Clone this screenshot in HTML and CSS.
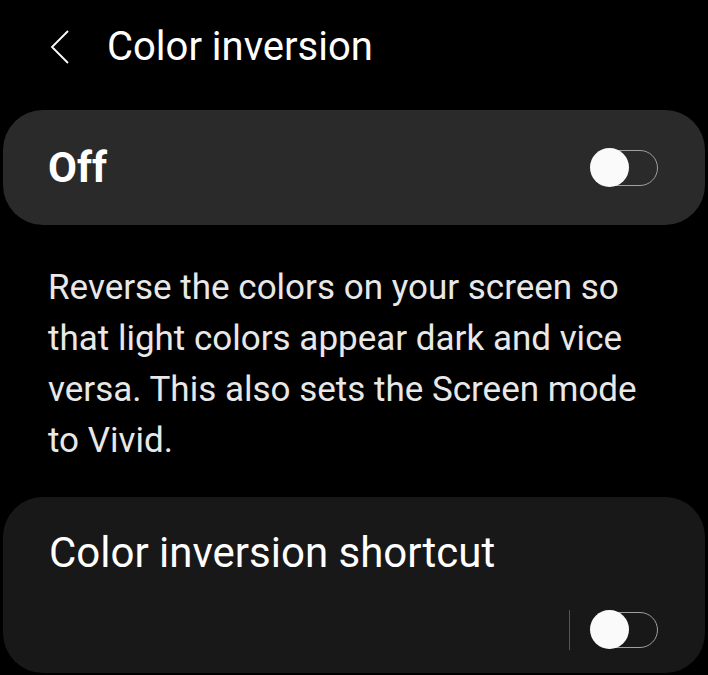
FILE: index.html
```html
<!DOCTYPE html>
<html>
<head>
<meta charset="utf-8">
<link rel="stylesheet" href="styles.css">
</head>
<body>
<div class="screen">
  <header class="header">
    <svg class="back" width="20" height="36" viewBox="0 0 20 36"><path d="M18 2 L2 18 L18 34" fill="none" stroke="#fff" stroke-width="1.8"/></svg>
    <h1 class="title">Color inversion</h1>
  </header>
  <section class="card card-main">
    <span class="main-label">Off</span>
    <span class="switch"><span class="knob"></span></span>
  </section>
  <p class="desc">Reverse the colors on your screen so that light colors appear dark and vice versa. This also sets the Screen mode to Vivid.</p>
  <section class="card card-shortcut">
    <div class="shortcut-title">Color inversion shortcut</div>
    <div class="shortcut-row">
      <span class="divider"></span>
      <span class="switch"><span class="knob"></span></span>
    </div>
  </section>
</div>
</body>
</html>
```
FILE: styles.css
```css
* { box-sizing: border-box; }
html, body { margin: 0; padding: 0; background: #000; }
body { font-family: Roboto, "Noto Sans", sans-serif; color: #fff; width: 708px; height: 675px; overflow: hidden; }
.screen { display: flex; flex-direction: column; padding: 0 3px; }
.header { height: 94px; display: flex; align-items: center; padding-left: 47px; }
.back { display: block; }
.title { margin: 0 0 0 37px; font-size: 40px; font-weight: 400; line-height: 1; }
.card { border-radius: 40px; }
.card-main { margin-top: 16px; height: 115px; background: #2a2a2a; display: flex; align-items: center; justify-content: space-between; padding: 0 47px 0 45px; }
.main-label { font-size: 42px; font-weight: 700; line-height: 1; }
.switch { position: relative; width: 67px; height: 36px; border: 1.5px solid #a0a0a0; border-radius: 18px; display: block; }
.knob { position: absolute; left: -2px; top: -3px; width: 39px; height: 39px; border-radius: 50%; background: #fafafa; }
.desc { margin: 37px 0 0; padding: 0 50px 0 45px; font-size: 35px; line-height: 51px; color: #e8e8e8; }
.card-shortcut { margin-top: 31px; height: 176px; background: #181818; padding: 31px 47px 0 46px; display: flex; flex-direction: column; }
.shortcut-title { font-size: 42px; line-height: 50px; }
.shortcut-row { display: flex; align-items: center; justify-content: flex-end; margin-top: 32px; gap: 21px; }
.divider { width: 1px; height: 40px; background: #555; }
```
